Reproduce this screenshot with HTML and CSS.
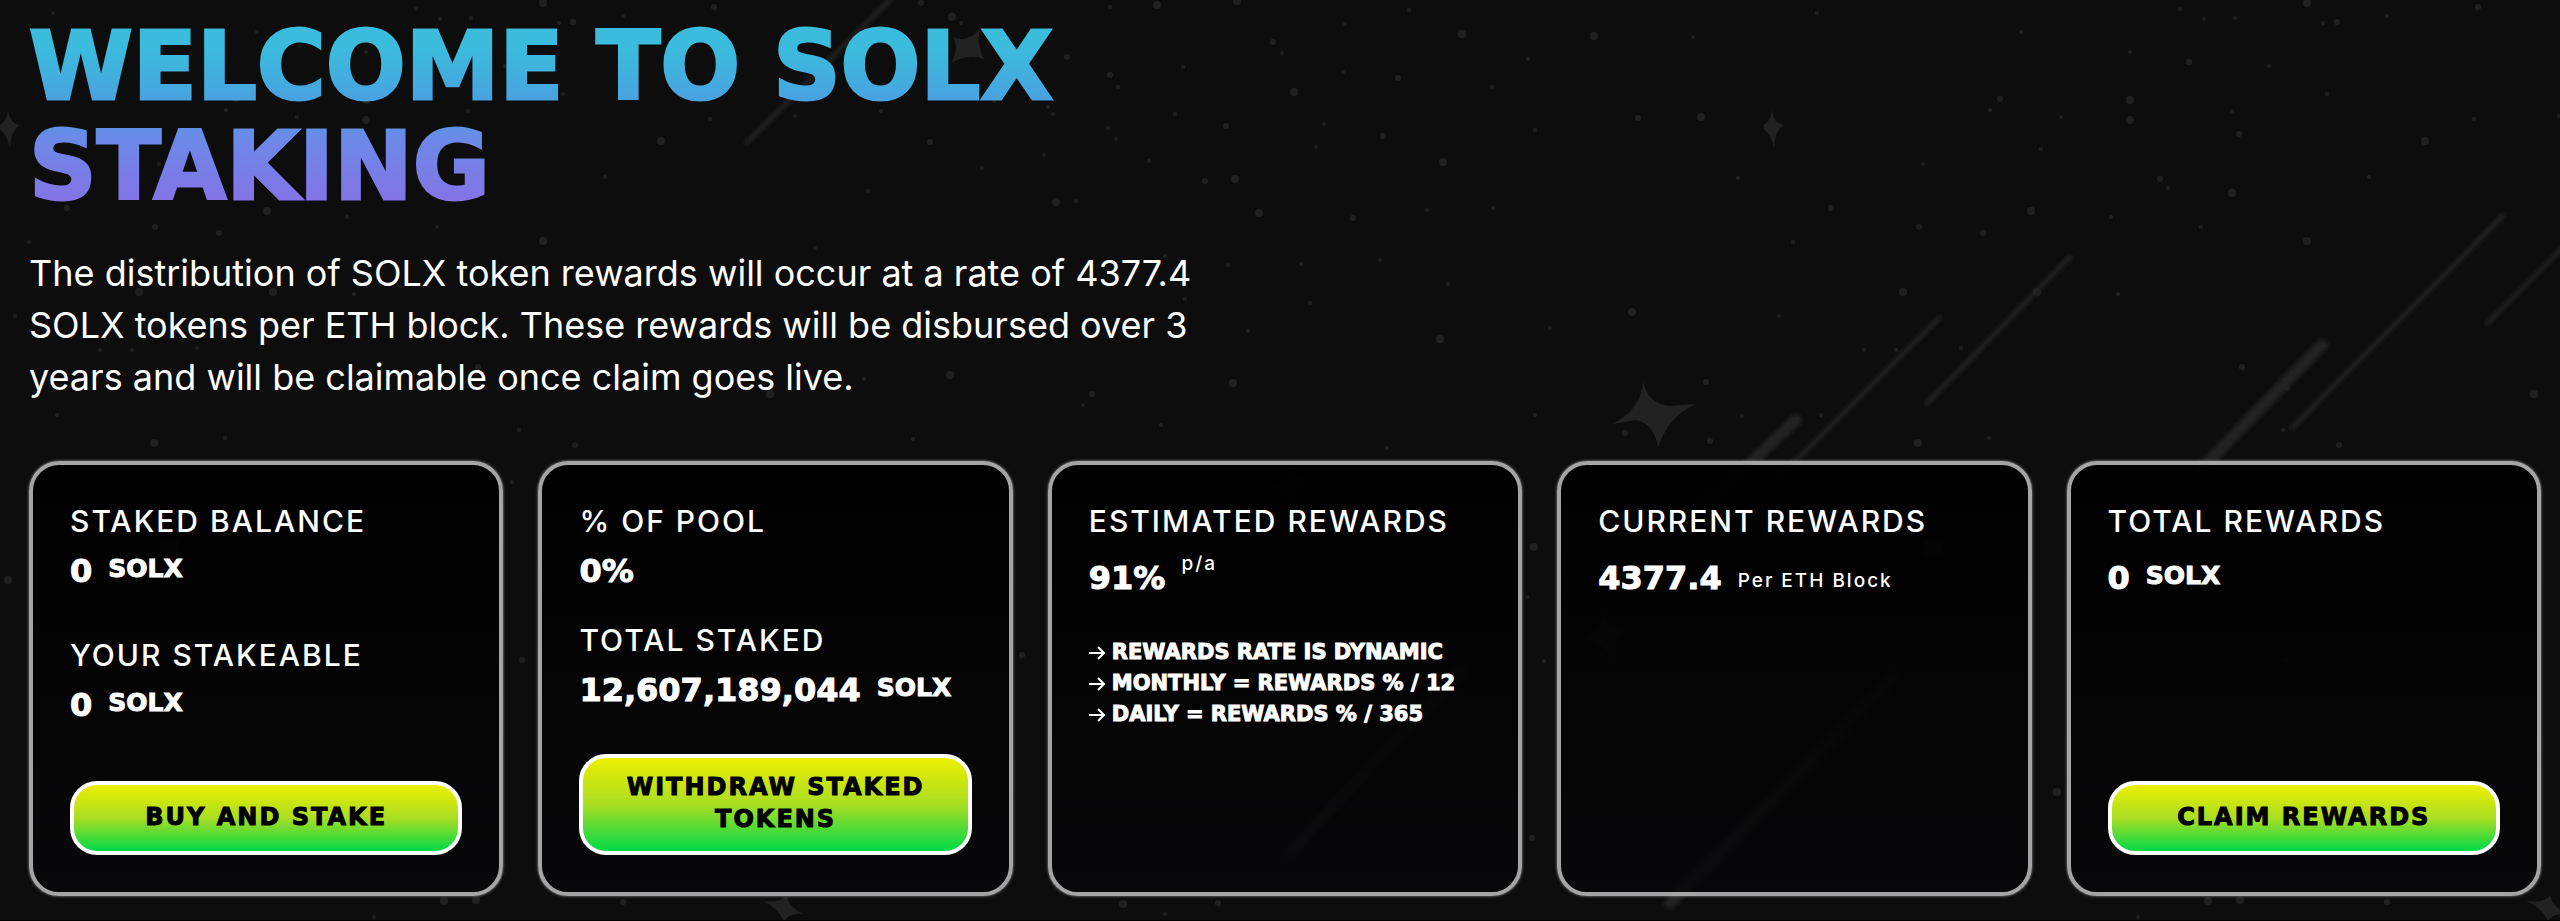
FILE: index.html
```html
<!DOCTYPE html>
<html lang="en">
<head>
<meta charset="utf-8">
<title>SOLX Staking</title>
<link rel="stylesheet" href="styles.css">
</head>
<body>
<svg class="sky" aria-hidden="true" width="100%" height="100%">
  <defs>
    <filter id="soft" x="-20%" y="-20%" width="140%" height="140%"><feGaussianBlur stdDeviation="2"/></filter>
    <pattern id="stars" width="1764" height="921" patternUnits="userSpaceOnUse">
      <g class="dots">
        <circle cx="543" cy="3" r="4"/><circle cx="416" cy="9" r="2"/><circle cx="53" cy="13" r="2"/><circle cx="623" cy="16" r="2"/><circle cx="471" cy="18" r="2"/><circle cx="440" cy="19" r="2"/><circle cx="559" cy="23" r="2"/><circle cx="573" cy="22" r="3"/><circle cx="257" cy="32" r="2"/><circle cx="714" cy="7" r="3"/>
        <circle cx="921" cy="3" r="3"/><circle cx="952" cy="17" r="4"/><circle cx="961" cy="23" r="2"/><circle cx="1110" cy="7" r="2"/><circle cx="1157" cy="5" r="4"/><circle cx="1067" cy="57" r="3"/><circle cx="1183" cy="67" r="2"/><circle cx="1110" cy="75" r="3"/><circle cx="1118" cy="87" r="2"/><circle cx="994" cy="101" r="2"/>
        <circle cx="366" cy="52" r="2"/><circle cx="425" cy="62" r="3"/><circle cx="505" cy="66" r="2"/><circle cx="366" cy="100" r="4"/><circle cx="366" cy="120" r="4"/><circle cx="236" cy="99" r="3"/><circle cx="226" cy="110" r="2"/><circle cx="297" cy="117" r="2"/><circle cx="468" cy="111" r="2"/><circle cx="563" cy="94" r="2"/><circle cx="475" cy="134" r="3"/>
        <circle cx="661" cy="141" r="4"/><circle cx="710" cy="119" r="2"/><circle cx="795" cy="116" r="2"/><circle cx="881" cy="111" r="2"/><circle cx="930" cy="142" r="3"/><circle cx="1048" cy="107" r="2"/><circle cx="1053" cy="114" r="2"/><circle cx="1108" cy="128" r="2"/><circle cx="1116" cy="139" r="2"/><circle cx="1175" cy="114" r="2"/><circle cx="1226" cy="126" r="3"/><circle cx="1044" cy="155" r="2"/><circle cx="1149" cy="161" r="2"/><circle cx="982" cy="168" r="2"/>
        <circle cx="159" cy="164" r="2"/><circle cx="277" cy="149" r="2"/><circle cx="396" cy="179" r="3"/><circle cx="404" cy="188" r="2"/><circle cx="468" cy="193" r="4"/><circle cx="605" cy="177" r="2"/><circle cx="67" cy="208" r="3"/><circle cx="267" cy="211" r="4"/><circle cx="347" cy="217" r="2"/><circle cx="155" cy="227" r="3"/><circle cx="219" cy="233" r="3"/><circle cx="437" cy="227" r="2"/><circle cx="543" cy="241" r="4"/><circle cx="29" cy="242" r="2"/>
        <circle cx="1205" cy="181" r="3"/><circle cx="1235" cy="179" r="4"/><circle cx="1056" cy="202" r="4"/><circle cx="1076" cy="201" r="2"/><circle cx="868" cy="191" r="2"/><circle cx="815" cy="248" r="2"/><circle cx="1165" cy="256" r="2"/><circle cx="1228" cy="265" r="2"/><circle cx="1185" cy="299" r="2"/>
        <circle cx="139" cy="292" r="4"/><circle cx="273" cy="292" r="4"/><circle cx="354" cy="294" r="2"/><circle cx="15" cy="316" r="2"/><circle cx="100" cy="350" r="2"/><circle cx="132" cy="350" r="2"/><circle cx="197" cy="348" r="2"/><circle cx="478" cy="367" r="3"/><circle cx="523" cy="388" r="3"/><circle cx="57" cy="415" r="2"/><circle cx="154" cy="443" r="4"/><circle cx="225" cy="438" r="2"/><circle cx="519" cy="430" r="2"/><circle cx="575" cy="445" r="3"/>
        <circle cx="950" cy="375" r="4"/><circle cx="770" cy="394" r="4"/><circle cx="1092" cy="394" r="3"/><circle cx="1083" cy="405" r="2"/><circle cx="1233" cy="383" r="4"/><circle cx="913" cy="439" r="2"/><circle cx="1161" cy="425" r="2"/><circle cx="864" cy="379" r="2"/>
        <circle cx="1237" cy="1" r="4"/><circle cx="1345" cy="24" r="2"/><circle cx="1273" cy="42" r="3"/><circle cx="1282" cy="53" r="2"/><circle cx="1462" cy="34" r="4"/><circle cx="1409" cy="10" r="2"/><circle cx="1528" cy="59" r="2"/><circle cx="1343" cy="72" r="2"/><circle cx="1398" cy="78" r="3"/><circle cx="1492" cy="87" r="2"/><circle cx="1294" cy="92" r="4"/><circle cx="1324" cy="124" r="2"/><circle cx="1316" cy="147" r="2"/><circle cx="1383" cy="136" r="3"/><circle cx="1443" cy="162" r="4"/><circle cx="1535" cy="130" r="2"/><circle cx="1259" cy="213" r="4"/><circle cx="1353" cy="218" r="3"/><circle cx="1427" cy="210" r="2"/><circle cx="1493" cy="208" r="2"/><circle cx="1301" cy="264" r="2"/><circle cx="1380" cy="260" r="2"/><circle cx="1448" cy="284" r="2"/><circle cx="1310" cy="303" r="2"/><circle cx="1248" cy="331" r="2"/><circle cx="1440" cy="339" r="4"/><circle cx="1550" cy="328" r="2"/><circle cx="1535" cy="415" r="2"/><circle cx="1387" cy="448" r="2"/>
        <circle cx="1594" cy="36" r="4"/><circle cx="1693" cy="37" r="2"/><circle cx="1638" cy="118" r="3"/><circle cx="1701" cy="117" r="4"/><circle cx="1738" cy="178" r="2"/><circle cx="1632" cy="312" r="4"/><circle cx="1706" cy="382" r="3"/><circle cx="1625" cy="433" r="3"/><circle cx="1710" cy="441" r="3"/><circle cx="1742" cy="416" r="2"/>
        <circle cx="8" cy="580" r="4"/><circle cx="512" cy="482" r="2"/><circle cx="522" cy="660" r="3"/><circle cx="1022" cy="655" r="3"/><circle cx="1534" cy="547" r="4"/><circle cx="1527" cy="597" r="2"/><circle cx="1544" cy="661" r="2"/><circle cx="1532" cy="838" r="3"/><circle cx="293" cy="792" r="4"/><circle cx="444" cy="901" r="4"/><circle cx="476" cy="900" r="4"/><circle cx="374" cy="917" r="2"/><circle cx="623" cy="902" r="3"/><circle cx="1123" cy="904" r="4"/><circle cx="1218" cy="903" r="3"/><circle cx="1165" cy="914" r="2"/>
      </g>
      <g class="sparks">
        <path d="M8 110Q9 123 20 125Q11 130 10 147Q6 131 -4 127Q7 123 8 110Z"/>
        <path d="M981 28Q975 41 984 59Q968 53 951 63Q960 48 953 37Q968 44 981 28Z"/>
        <path d="M1643 382Q1648 404 1669 406L1695 404Q1667 418 1658 448Q1655 424 1636 420L1612 424Q1641 410 1643 382Z"/>
        <path d="M763 901Q778 904 786 896Q790 908 803 914Q790 912 784 921Q778 908 763 901Z"/>
        <path d="M1290 468Q1293 480 1310 478Q1295 484 1296 500Q1289 487 1270 489Q1288 482 1290 468Z"/>
        <path d="M1602 610Q1606 630 1630 627Q1612 637 1615 662Q1605 642 1584 638Q1603 632 1602 610Z"/>
        <path d="M158 537Q170 545 182 537Q175 547 180 557Q170 553 158 557Q163 547 158 537Z"/>
      </g>
    </pattern>
  </defs>
  <rect width="100%" height="100%" fill="url(#stars)"/>
  <g class="streaks" filter="url(#soft)">
    <path d="M890 0L747 142M1939 318L1773 483M2070 257L1927 403M2504 215L2292 428M2570 240L2488 323"/>
    <path class="wide" d="M2322 345L2200 470M1796 420L1700 510M1463 670L1290 852M1893 678L1670 903"/>
  </g>
</svg>
<main class="page">
  <header class="intro">
    <h1 class="title">WELCOME TO SOLX STAKING</h1>
    <p class="lead">The distribution of SOLX token rewards will occur at a rate of 4377.4 SOLX tokens per ETH block. These rewards will be disbursed over 3 years and will be claimable once claim goes live.</p>
  </header>
  <section class="cards">
    <article class="card">
      <div class="stat stat-spaced">
        <h2 class="label">STAKED BALANCE</h2>
        <p class="value">0 <span class="unit">SOLX</span></p>
      </div>
      <div class="stat">
        <h2 class="label">YOUR STAKEABLE</h2>
        <p class="value">0 <span class="unit">SOLX</span></p>
      </div>
      <button class="action" type="button">BUY AND STAKE</button>
    </article>
    <article class="card">
      <div class="stat">
        <h2 class="label">% OF POOL</h2>
        <p class="value">0%</p>
      </div>
      <div class="stat">
        <h2 class="label">TOTAL STAKED</h2>
        <p class="value">12,607,189,044 <span class="unit">SOLX</span></p>
      </div>
      <button class="action" type="button">WITHDRAW STAKED TOKENS</button>
    </article>
    <article class="card">
      <div class="stat stat-single">
        <h2 class="label">ESTIMATED REWARDS</h2>
        <p class="value">91% <span class="note note-raised">p/a</span></p>
      </div>
      <ul class="facts">
        <li><svg class="arrow" viewBox="0 0 16 16" aria-hidden="true"><path d="M0 8H15M9 2L15 8L9 14"/></svg>REWARDS RATE IS DYNAMIC</li>
        <li><svg class="arrow" viewBox="0 0 16 16" aria-hidden="true"><path d="M0 8H15M9 2L15 8L9 14"/></svg>MONTHLY = REWARDS % / 12</li>
        <li><svg class="arrow" viewBox="0 0 16 16" aria-hidden="true"><path d="M0 8H15M9 2L15 8L9 14"/></svg>DAILY = REWARDS % / 365</li>
      </ul>
    </article>
    <article class="card">
      <div class="stat stat-single">
        <h2 class="label">CURRENT REWARDS</h2>
        <p class="value">4377.4 <span class="note">Per ETH Block</span></p>
      </div>
    </article>
    <article class="card">
      <div class="stat stat-single">
        <h2 class="label">TOTAL REWARDS</h2>
        <p class="value">0 <span class="unit">SOLX</span></p>
      </div>
      <button class="action" type="button">CLAIM REWARDS</button>
    </article>
  </section>
</main>
</body>
</html>
```
FILE: styles.css
```css
* { box-sizing: border-box; }

body {
  margin: 0;
  min-height: 100vh;
  position: relative;
  overflow-x: hidden;
  background: #0d0d0d;
  color: #fff;
  font-family: Inter, "Liberation Sans", sans-serif;
}

h1, h2, p, ul { margin: 0; padding: 0; }

.sky { position: absolute; inset: 0; }
.dots { fill: #202020; }
.sparks { fill: #222; }
.streaks { fill: none; stroke: #232323; stroke-width: 5; stroke-linecap: round; }
.streaks .wide { stroke: #202020; stroke-width: 12; }

.page {
  position: relative;
  min-height: 100vh;
  padding: 17px 19px 24px 29px;
  border-bottom: 1px solid #010101;
}

.intro { max-width: 1180px; }

.title {
  font-family: "DejaVu Sans", sans-serif;
  font-size: 94px;
  font-weight: 700;
  line-height: 100px;
  color: transparent;
  -webkit-text-stroke: 3px transparent;
  background: linear-gradient(#3bbcdd 15%, #4a9fe0 45%, #6b8ae8 60%, #8573e6 92%);
  -webkit-background-clip: text;
  background-clip: text;
}

.lead {
  margin-top: 30px;
  font-size: 36px;
  line-height: 52px;
}

.cards {
  display: grid;
  grid-template-columns: repeat(5, minmax(0, 1fr));
  gap: 35px;
  margin-top: 58px;
}

.card {
  display: flex;
  flex-direction: column;
  min-height: 435px;
  padding: 36px 37px 37px;
  border: 4px solid #a5a5a5;
  border-radius: 30px;
  background: linear-gradient(rgba(0, 0, 0, .94), rgba(7, 7, 9, .85));
  box-shadow: 0 0 3px #999;
}

.label {
  font-size: 30px;
  font-weight: 500;
  line-height: 40px;
  letter-spacing: 2px;
}

.value {
  display: flex;
  gap: 16px;
  margin-top: 6px;
  font-family: "DejaVu Sans", sans-serif;
  font-size: 32px;
  font-weight: 700;
  line-height: 48px;
  -webkit-text-stroke: 1px #fff;
}

.stat { margin-bottom: 25px; }
.stat-spaced { margin-bottom: 40px; }
.stat-single .value { margin-top: 13px; }

.unit { font-size: 25px; line-height: 44px; }

.note {
  font-family: Inter, sans-serif;
  font-size: 19px;
  font-weight: 500;
  line-height: 54px;
  letter-spacing: 2px;
  -webkit-text-stroke: 0;
}
.note-raised { line-height: 20px; }

.facts {
  margin-top: 10px;
  list-style: none;
  font-family: "DejaVu Sans", sans-serif;
  font-size: 21px;
  font-weight: 700;
  line-height: 31px;
  white-space: nowrap;
  -webkit-text-stroke: 1px #fff;
}
.facts li { display: flex; align-items: center; gap: 7px; }
.arrow { width: 16px; height: 16px; fill: none; stroke: #fff; stroke-width: 2; }

.action {
  width: 100%;
  min-height: 74px;
  margin-top: auto;
  padding: 13px 28px 16px;
  border: 4px solid #fff;
  border-radius: 27px;
  background: linear-gradient(#ecef00, #aadd22 50%, #00d948);
  color: #000;
  font-family: "DejaVu Sans", sans-serif;
  font-size: 24px;
  font-weight: 700;
  line-height: 32px;
  letter-spacing: 2px;
  -webkit-text-stroke: 1px #000;
}
```
